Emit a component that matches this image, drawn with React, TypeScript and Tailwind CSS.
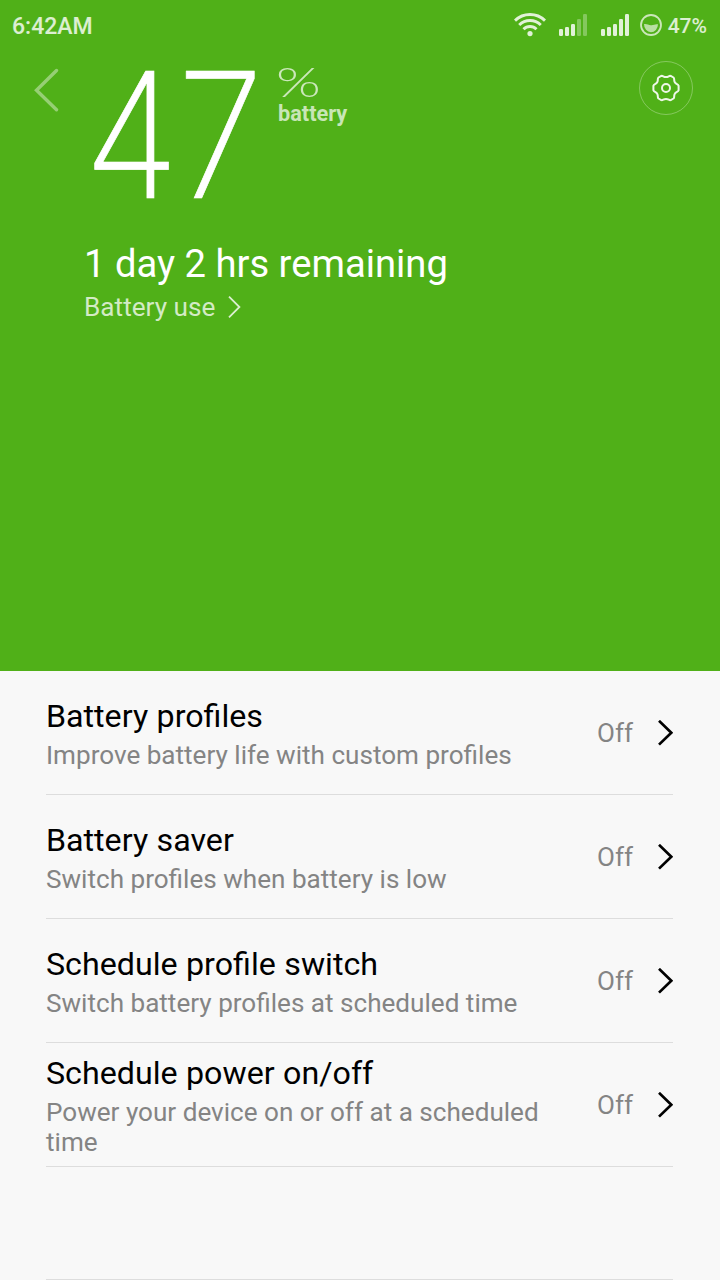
import React from "react";

type Row = { title: string; detail: string; value: string };

const rows: Row[] = [
  { title: "Battery profiles", detail: "Improve battery life with custom profiles", value: "Off" },
  { title: "Battery saver", detail: "Switch profiles when battery is low", value: "Off" },
  { title: "Schedule profile switch", detail: "Switch battery profiles at scheduled time", value: "Off" },
  { title: "Schedule power on/off", detail: "Power your device on or off at a scheduled time", value: "Off" },
];

function Signal({ level }: { level: number }) {
  const heights = [7, 9, 12, 17, 22];
  return (
    <svg width="28" height="22" viewBox="0 0 28 22" fill="#fff">
      {heights.map((h, i) => (
        <rect key={h} x={i * 6} y={22 - h} width="4" height={h} rx="1.2" opacity={i < level ? 0.83 : 0.3} />
      ))}
    </svg>
  );
}

function Wifi() {
  return (
    <svg width="32" height="24" viewBox="0 0 32 24" fill="none" stroke="#fff" strokeOpacity="0.83" strokeWidth="2.9">
      <path d="M1 7.600A21.500 21.500 0 0 1 31 7.600" />
      <path d="M5.200 12A15.300 15.300 0 0 1 26.800 12" />
      <path d="M9.500 16.200A9.200 9.200 0 0 1 22.500 16.200" />
      <circle cx="16" cy="20.600" r="2.600" fill="#fff" fillOpacity="0.83" stroke="none" />
    </svg>
  );
}

function BatteryRing() {
  return (
    <svg width="22" height="22" viewBox="0 0 22 22" fill="none">
      <circle cx="11" cy="11" r="10" stroke="#fff" strokeOpacity="0.7" strokeWidth="1.800" />
      <path d="M4 10.100C7 9.500 8.500 11.500 11.500 11.200C14 10.900 15.500 9.700 18 10.300A7 8 0 0 1 4 10.100Z" fill="#fff" fillOpacity="0.6" />
    </svg>
  );
}

function Gear() {
  return (
    <svg width="28" height="28" viewBox="0 0 28 28" fill="none" stroke="#fff" strokeOpacity="0.9" strokeWidth="2" strokeLinejoin="round">
      <path d="M9.300 1.900C11 1.400 11.300 3.100 14 3.100S17 1.400 18.700 1.900L21.500 3.500C22.900 4.700 21.500 6 22.800 8.300C24 10.600 26 9.900 26.600 11.800V16.200C26 18.100 24 17.400 22.800 19.700C21.500 22 22.900 23.300 21.500 24.500L18.700 26.100C17 26.600 16.700 24.900 14 24.900S11 26.600 9.300 26.100L6.500 24.500C5.100 23.300 6.500 22 5.200 19.700C4 17.400 2 18.100 1.400 16.200V11.800C2 9.900 4 10.600 5.200 8.300C6.500 6 5.100 4.700 6.500 3.500Z" />
      <circle cx="14" cy="14" r="4" />
    </svg>
  );
}

function ProfileRow({ title, detail, value }: Row) {
  return (
    <li className="flex h-[124px] items-center border-b border-[#dddddd]">
      <div className="w-[520px] pt-[2px]">
        <h2 className="mb-[6px] text-[32.2px] leading-[36px] [word-spacing:0.5px] text-black">{title}</h2>
        <p className="text-[26.1px] leading-[30px] text-[#848484]">{detail}</p>
      </div>
      <span className="ml-auto text-[26px] leading-[30px] text-[#848484]">{value}</span>
      <svg className="ml-[25px]" width="15" height="26" viewBox="0 0 15 26" fill="none" stroke="#000" strokeWidth="2.7">
        <path d="M1 0.800L13.300 12.700L1 24.600" />
      </svg>
    </li>
  );
}

export default function App() {
  return (
    <div className="flex h-[1280px] w-[720px] flex-col overflow-hidden bg-[#f8f8f8] font-['Roboto',sans-serif]">
      <section className="h-[671px] bg-[#50b018] text-white">
        <header className="flex h-[50px] items-center pr-[13px] pl-3">
          <span className="pt-[4px] text-[23px] font-medium text-white/80">6:42AM</span>
          <div className="ml-auto flex items-center">
            <Wifi />
            <div className="ml-[13px]"><Signal level={3} /></div>
            <div className="ml-[14px]"><Signal level={5} /></div>
            <div className="ml-[11px]"><BatteryRing /></div>
            <span className="ml-[6px] pt-[3px] text-[21px] font-medium text-white/80">47%</span>
          </div>
        </header>
        <div className="flex h-[190px] items-start">
          <button className="mt-[18px] ml-[33px]" aria-label="Back">
            <svg width="26" height="44" viewBox="0 0 26 44" fill="none" stroke="#fff" strokeOpacity="0.4" strokeWidth="3.400" strokeLinecap="round">
              <path d="M23.500 2.500L3.500 22.200L23.500 41.800" />
            </svg>
          </button>
          <div className="ml-[25px] w-[178px] origin-left scale-x-[0.888] font-['Inter',sans-serif] text-[175px] leading-[169px] font-extralight tracking-[-2px] [-webkit-text-stroke:0.7px_white]">47</div>
          <div className="ml-[16px] pt-[14px]">
            <div className="ml-[-2.500px] origin-left scale-x-[1.4] font-['Lato'] text-[41px] leading-[36px] font-light text-white/70">%</div>
            <div className="text-[21.7px] leading-[28px] font-bold text-white/70">battery</div>
          </div>
          <button className="mt-[11px] mr-[27px] ml-auto flex size-[54px] items-center justify-center rounded-full border border-white/30" aria-label="Settings">
            <Gear />
          </button>
        </div>
        <div className="pl-[84px]">
          <h1 className="text-[38.2px] leading-[48px]">1 day 2 hrs remaining</h1>
          <a className="flex items-center text-[26.2px] leading-[38px] text-white/75">
            Battery use
            <svg className="ml-[13px]" width="13" height="22" viewBox="0 0 13 22" fill="none" stroke="#fff" strokeOpacity="0.8" strokeWidth="1.800">
              <path d="M1 0.700L11.400 11L1 21.300" />
            </svg>
          </a>
        </div>
      </section>
      <ul className="mr-[47px] ml-[46px]">
        {rows.map((row) => (
          <ProfileRow key={row.title} {...row} />
        ))}
        <li className="h-[113px] border-b border-[#dddddd]" />
      </ul>
    </div>
  );
}
